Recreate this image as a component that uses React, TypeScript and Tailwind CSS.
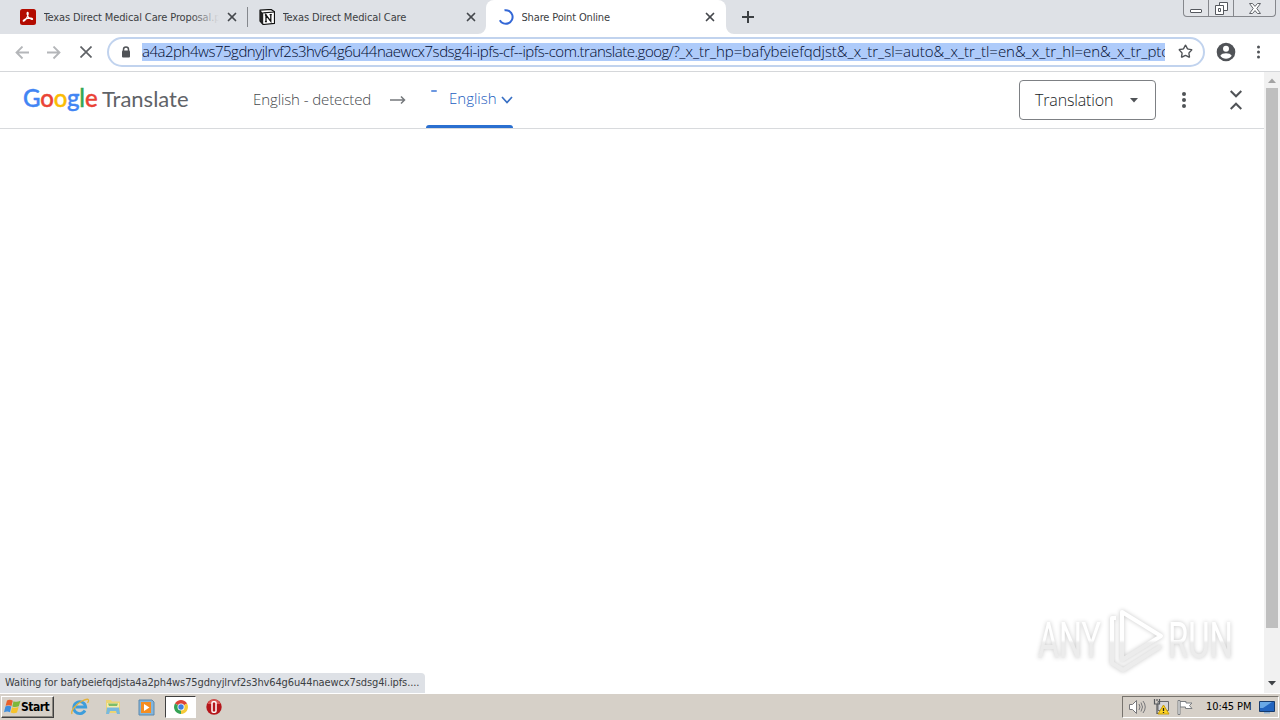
import React from 'react';
import { Star, X } from 'lucide-react';

const URL_HOST = 'a4a2ph4ws75gdnyjlrvf2s3hv64g6u44naewcx7sdsg4i-ipfs-cf--ipfs-com.translate.goog/?';
const URL_QUERY = '_x_tr_hp=bafybeiefqdjst&_x_tr_sl=auto&_x_tr_tl=en&_x_tr_hl=en&_x_tr_ptc';

const AdobeIcon = () => (
  <svg width="16" height="16" viewBox="0 0 16 16" className="shrink-0">
    <rect width="16" height="16" rx="2.5" fill="#b30b00" />
    <path
      d="M7.6 3.4c1.2 0 .5 3-.7 5.200C5.700 10.900 4 12.700 3.300 12.200c-.8-.7 1.700-2.300 4.300-2.800 2.500-.5 5-.4 5 .5 0 1.100-2.200.3-3.700-1.200C7.300 7.200 6.400 3.400 7.600 3.400z"
      fill="none"
      stroke="#fff"
      strokeWidth="1.100"
    />
  </svg>
);

const NotionIcon = () => (
  <svg width="16" height="16" viewBox="0 0 16 16" className="shrink-0">
    <path d="M1 1.200 12 .4l3.500 2.300v11.600L4.200 15.500 1 12z" fill="#fff" stroke="#111" strokeWidth="1.200" strokeLinejoin="round" />
    <path d="M1 1.200 4.200 4v11.500L1 12z" fill="#222" />
    <path d="M4.200 3.800 15.500 3" stroke="#111" strokeWidth="1.200" />
    <path d="M7 12.500V6l4.800 6.300V5.800M5.900 6h1.900M10.600 5.700h2.200M5.900 12.600h2" fill="none" stroke="#111" strokeWidth="1.300" />
  </svg>
);

const Spinner = () => (
  <svg width="16" height="16" viewBox="0 0 16 16" className="shrink-0">
    <path d="M6.500 1.300A6.800 6.800 0 1 1 1.800 11.200" fill="none" stroke="#3367d6" strokeWidth="2" />
  </svg>
);

const CloseIcon = () => <X size={14} strokeWidth={3} className="shrink-0 text-[#45484d]" />;

const Tab = ({ icon, title, spacing, fade }: { icon: React.ReactNode; title: string; spacing: string; fade?: boolean }) => (
  <>
    {icon}
    <div className={`relative ml-[7.5px] mr-1.5 min-w-0 flex-1 overflow-hidden whitespace-nowrap pt-px text-[11px] leading-4 text-[#3c4043] ${spacing}`}>
      {title}
      {fade && <div className="absolute inset-y-0 right-0 w-7 bg-linear-to-r from-transparent to-[#dee1e6]" />}
    </div>
    <CloseIcon />
  </>
);

const TabStrip = () => (
  <div className="relative flex h-[34px] bg-[#dee1e6]">
    <div className="flex w-[247px] items-center border-r border-transparent pl-5 pr-[7px]">
      <Tab icon={<AdobeIcon />} title="Texas Direct Medical Care Proposal.p" spacing="tracking-[-0.13px]" fade />
    </div>
    <div className="my-[7px] w-px bg-[#85888d]" />
    <div className="flex w-[238px] items-center pl-[11px] pr-2">
      <Tab icon={<NotionIcon />} title="Texas Direct Medical Care" spacing="tracking-[-0.13px]" />
    </div>
    <div className="relative flex w-[240px] items-center rounded-t-lg bg-white pl-3 pr-[9px]">
      <svg width="8" height="8" className="absolute -left-2 bottom-0">
        <path d="M8 0v8H0A8 8 0 0 0 8 0z" fill="#fff" />
      </svg>
      <Tab icon={<Spinner />} title="Share Point Online" spacing="tracking-[-0.16px]" />
      <svg width="8" height="8" className="absolute -right-2 bottom-0">
        <path d="M0 0v8h8A8 8 0 0 1 0 0z" fill="#fff" />
      </svg>
    </div>
    <div className="flex items-center pl-4">
      <svg width="12" height="12" stroke="#3c4043" strokeWidth="2">
        <path d="M6 0v12M0 6h12" />
      </svg>
    </div>
    <div className="ml-auto mr-1 flex h-[17px] w-[93px] rounded-b-[4px] border border-t-0 border-[#85878c] bg-[#e2e4e8]">
      <div className="flex w-[25px] items-end justify-center border-r border-[#85878c] pb-[3px]">
        <div className="h-1 w-3 rounded-[1px] border border-[#55585e] bg-white" />
      </div>
      <div className="flex w-[25px] items-center justify-center border-r border-[#85878c]">
        <svg width="13" height="13" fill="#fff" stroke="#55585e">
          <path d="M4.500.500h8v8h-8z" />
          <path d="M.5 3.500h8v9h-8zM3.500 6.500h2v3h-2z" />
        </svg>
      </div>
      <div className="flex flex-1 items-center justify-center">
        <svg width="12" height="11" fill="#fff" stroke="#62656a">
          <path d="M.5.500h3L6 3.400 8.500.500h3L7.800 5.500l3.700 5h-3L6 7.600 3.500 10.500h-3l3.700-5z" />
        </svg>
      </div>
    </div>
  </div>
);

const Toolbar = () => (
  <div className="flex h-[38px] items-center border-b border-[#d5d7da] bg-white pl-[15px]">
    <svg width="14" height="14" fill="none" stroke="#b4b6b9" strokeWidth="1.800">
      <path d="M14 6.500H1.500M7.500.500 1.500 6.500l6 6" />
    </svg>
    <svg width="14" height="14" fill="none" stroke="#b4b6b9" strokeWidth="1.800" className="ml-[18px]">
      <path d="M0 6.500h12.500M6.500.500l6 6-6 6" />
    </svg>
    <svg width="12" height="12" stroke="#5f6266" strokeWidth="1.700" className="-mt-px ml-[19px]">
      <path d="M.5.500l11 11M11.500.500l-11 11" />
    </svg>
    <div className="ml-[15px] flex h-[30px] w-[1098px] -translate-y-px items-center rounded-full border-2 border-[#c1d3ee] bg-white pl-3">
      <svg width="10" height="12" className="mr-[11px] shrink-0">
        <path d="M2.500 5V3.400a2.500 2.500 0 0 1 5 0V5" fill="none" stroke="#505357" strokeWidth="1.500" />
        <rect x="1" y="4.500" width="8" height="7" rx="1" fill="#505357" />
      </svg>
      <div className="h-[18px] w-[1023px] overflow-hidden whitespace-nowrap bg-[#aecbfa] font-['Open_Sans',sans-serif] text-[15px] font-light leading-[17px] text-[#020c30]">
        <span className="tracking-[-0.475px]">{URL_HOST}</span>
        <span className="tracking-[-0.02px]">{URL_QUERY}</span>
      </div>
      <Star size={15} strokeWidth={2.200} className="ml-[13px] shrink-0 text-[#505357]" />
    </div>
    <svg width="20" height="20" className="-mt-px ml-[11px]">
      <circle cx="10" cy="10" r="9.300" fill="#505357" />
      <circle cx="10" cy="6.800" r="3" fill="#fff" />
      <path d="M4.300 13.800c1.500-3.300 9.900-3.300 11.400 0-2.300 4-9.100 4-11.400 0z" fill="#fff" />
    </svg>
    <svg width="4" height="14" fill="#505357" className="-mt-px ml-5">
      <circle cx="2.500" cy="2" r="1.500" />
      <circle cx="2.500" cy="7" r="1.500" />
      <circle cx="2.500" cy="12" r="1.500" />
    </svg>
  </div>
);

const TranslateBar = () => (
  <div className="flex h-[57px] items-center border-b border-[#d8dadd] bg-white pl-[23px]">
    <div className="flex w-[230px] items-baseline pb-1 font-[Lato] leading-7 text-[#5f6368]">
      <span className="w-[79px] text-[24px] font-medium tracking-[-0.2px] [-webkit-text-stroke:0.4px]">
        <span className="text-[#4285f4]">G</span>
        <span className="text-[#ea4335]">o</span>
        <span className="text-[#fbbc04]">o</span>
        <span className="text-[#4285f4]">g</span>
        <span className="text-[#34a853]">l</span>
        <span className="text-[#ea4335]">e</span>
      </span>
      <span className="text-[22px]">Translate</span>
    </div>
    <div className="w-[137px] whitespace-nowrap pb-px font-['Open_Sans',sans-serif] text-[15px] font-light tracking-[-0.1px] text-[#45484c]">
      English - detected
    </div>
    <svg width="16" height="10" fill="none" stroke="#75787c" strokeWidth="1.500">
      <path d="M0 5h14.500M11 1.500 14.500 5 11 8.500" />
    </svg>
    <div className="relative ml-5 h-full w-[87px]">
      <div className="absolute left-[5px] top-[18px] h-0.5 w-[6px] rounded-full bg-[#6c97e0]" />
      <div className="flex h-full items-center pl-[23px] font-['Open_Sans',sans-serif] text-[15px] font-light text-[#1a5cc0]">
        <span className="w-[53px] pb-[3px]">English</span>
        <svg width="12" height="8" fill="none" stroke="#3970c4" strokeWidth="1.700" className="shrink-0">
          <path d="M1 1l5 5.500L11 1" />
        </svg>
      </div>
      <div className="absolute inset-x-0 bottom-0 h-[3px] rounded-t-sm bg-[#2a6fd0]" />
    </div>
    <button className="ml-auto mr-[26px] flex h-10 w-[137px] items-center rounded-[4px] border border-[#7d8084] pl-[15px] font-['Open_Sans',sans-serif] text-base font-light text-[#202326]">
      <span className="w-[95px] text-left tracking-[-0.15px]">Translation</span>
      <svg width="8" height="5" fill="#505357">
        <path d="M0 0h8L4 4.500z" />
      </svg>
    </button>
    <svg width="4" height="18" fill="#505357">
      <circle cx="2" cy="3" r="2" />
      <circle cx="2" cy="9" r="2" />
      <circle cx="2" cy="15" r="2" />
    </svg>
    <svg width="12" height="22" fill="none" stroke="#505357" strokeWidth="2" className="ml-11 mr-[22px]">
      <path d="M.7 2 6 7.300 11.300 2M.7 20 6 14.700 11.300 20" />
    </svg>
  </div>
);

const Watermark = () => (
  <svg
    width="220"
    height="76"
    className="absolute bottom-[13px] right-[14px] overflow-visible drop-shadow-[0_0_2px_rgba(0,0,0,0.22)]"
    fontFamily="Roboto, sans-serif"
    fontSize="50"
  >
    <defs>
      <linearGradient id="mark" x1="0" y1="0" x2="0" y2="72" gradientUnits="userSpaceOnUse">
        <stop offset="0.500" stopColor="#fff" />
        <stop offset="0.540" stopColor="#ececec" />
      </linearGradient>
    </defs>
    <g fill="url(#mark)">
      <text x="8" y="54" textLength="63" lengthAdjust="spacingAndGlyphs">ANY</text>
      <text x="138" y="54" textLength="65" lengthAdjust="spacingAndGlyphs">RUN</text>
    </g>
    <g fill="none" stroke="url(#mark)" strokeWidth="4" strokeLinejoin="round">
      <path d="M92 8 131 32 92 56z" />
      <path d="M86 14h-4v45l11 7 38-24" />
    </g>
  </svg>
);

const Scrollbar = () => (
  <div className="flex w-4 flex-col items-center justify-between bg-[#f1f1f1]">
    <svg width="16" height="16" fill="#a3a3a3">
      <path d="M4 11h8L8 6.500z" />
    </svg>
    <div className="mb-auto h-[540px] w-3 bg-[#bfbfbf]" />
    <svg width="16" height="17" fill="#404347">
      <path d="M4 5h8l-4 4.500z" />
    </svg>
  </div>
);

const Taskbar = () => (
  <div className="flex h-[27px] items-center border-t border-white bg-[#d6d0c8] text-black">
    <div className="ml-px flex h-[22px] w-[53px] items-center border border-b-[#404040] border-l-white border-r-[#404040] border-t-white pl-0.5 shadow-[inset_-1px_-1px_#8b8780]">
      <svg width="17" height="16" viewBox="0 0 17 16">
        <path d="M3 1.500c2-1.200 4.200-.8 5.800.2L7.500 7C5.700 6 3.800 5.900 1.600 6.800z" fill="#e8602c" />
        <path d="M9.500 2.200c2 .9 4.500.8 7-.5L14.800 7.200c-2.300 1-4.500 1-6.500.2z" fill="#7db83a" />
        <path d="M1.400 7.500c2.200-1 4.100-.8 5.900.1L6 13.200C4.100 12.200 2.200 12.300 0 13.300z" fill="#3e8ede" />
        <path d="M8.100 8.200c2 .9 4.300.8 6.500-.2l-1.600 5.600c-2.200 1-4.300.9-6.300 0z" fill="#f6c32c" />
      </svg>
      <span className="text-xs font-bold tracking-[-0.5px]">Start</span>
    </div>
    <div className="flex items-center pl-4">
      <svg width="20" height="18" viewBox="0 0 20 18">
        <path d="M15 12.500A6 6 0 1 1 15.700 9H5.500" fill="none" stroke="#3d9ddb" strokeWidth="2.800" />
        <path d="M2 16C.500 13 6 6 12 3s8-2 5.500 2" fill="none" stroke="#e4b23a" strokeWidth="1.300" />
      </svg>
      <svg width="16" height="16" viewBox="0 0 16 16" className="ml-[15px]">
        <path d="M1 1h5l1 1.500h8V14H1z" fill="#ecd474" />
        <path d="M2 4h12v8H2z" fill="#f8ebab" />
        <path d="M4 7h8l1-2.500H3z" fill="#7cbd69" />
        <path d="M2 8.500h12l1 6.500h-3l-1-3H5l-1 3H1z" fill="#78b9df" />
      </svg>
      <svg width="17" height="17" viewBox="0 0 17 17" className="ml-[17px]">
        <path d="M1 1h13l2 2v13H1z" fill="#83b5dc" stroke="#5d89ad" />
        <rect x="3" y="3" width="10" height="11" fill="#f58d20" />
        <path d="M6 5v7l5.500-3.500z" fill="#fff" />
      </svg>
      <div className="ml-[10px] flex h-[22px] w-[31px] items-center justify-center border border-b-white border-l-[#404040] border-r-white border-t-[#404040] bg-white">
        <svg width="14" height="14" viewBox="0 0 16 16">
          <path d="M8 8 1.100 4A8 8 0 0 1 14.900 4z" fill="#dc4437" />
          <path d="M8 8 8 16A8 8 0 0 1 1.100 4z" fill="#35a355" />
          <path d="M8 8 14.900 4A8 8 0 0 1 8 16z" fill="#f6ca38" />
          <circle cx="8" cy="8" r="4" fill="#fff" />
          <circle cx="8" cy="8" r="3.100" fill="#3f7fe0" />
        </svg>
      </div>
      <svg width="16" height="16" viewBox="0 0 16 16" className="ml-[10px]">
        <circle cx="8" cy="8" r="7.700" fill="#b5161b" />
        <path d="M1.500 5a7 7 0 0 1 13 0z" fill="#dc5551" />
        <rect x="6" y="2.800" width="4" height="10.400" rx="1.300" fill="#b5161b" stroke="#fff" strokeWidth="1.500" />
      </svg>
    </div>
    <div className="ml-auto mr-px flex h-[22px] w-[157px] items-center border border-b-white border-l-[#77736d] border-r-white border-t-[#77736d] pl-1.5">
      <svg width="18" height="16" viewBox="0 0 18 16" fill="none" stroke="#77777a">
        <path d="M.5 5.500h3l4-4v13l-4-4h-3z" fill="#fff" />
        <path d="M10 5q2 3 0 6M12 3.500q3 4.500 0 9M14 2q4.500 6 0 12" />
      </svg>
      <svg width="17" height="16" viewBox="0 0 17 16" className="ml-1.5">
        <path d="M5 2.500h10.500v9H5z" fill="#d5d6d8" stroke="#66696d" />
        <path d="M1.500 0v5h5V0M4 0v2M4 5v9.500h5" fill="none" stroke="#55585b" strokeWidth="1.200" />
        <path d="M10.500 6 16 15H5z" fill="#fdd321" stroke="#c79c0a" />
        <path d="M10.500 9v3M10.500 13v1" stroke="#222" strokeWidth="1.300" />
      </svg>
      <svg width="16" height="15" viewBox="0 0 16 15" className="ml-[7px]" stroke="#7b7e81" fill="#fff">
        <path d="M3 1.500h6v1.500h6l-2.500 2.500L15 8.500H8.500V7H3z" />
        <path d="M1 .500h2v14H1z" />
      </svg>
      <span className="ml-[13px] w-[53px] whitespace-nowrap text-[11px] tracking-[-0.1px]">10:45 PM</span>
      <svg width="16" height="13" viewBox="0 0 16 13">
        <path d="M.5.500h15v10H.500z" fill="#2264bf" stroke="#173b6c" />
        <path d="M1 1h12L4 7H1z" fill="#69a8e6" />
        <path d="M5 11h6v1.500H5z" fill="#8fb1d5" />
      </svg>
    </div>
  </div>
);

export default function App() {
  return (
    <div className="flex h-[720px] w-[1280px] flex-col overflow-hidden bg-white font-['DejaVu_Sans_Condensed','DejaVu_Sans',sans-serif]">
      <TabStrip />
      <Toolbar />
      <div className="flex min-h-0 flex-1">
        <div className="relative flex-1">
          <TranslateBar />
          <Watermark />
          <div className="absolute bottom-0 left-0 h-5 w-[425px] overflow-hidden whitespace-nowrap rounded-tr-[4px] bg-[#dee1e6] pl-[5px] text-[11px] leading-5 tracking-[-0.12px] text-[#3c4043]">
            Waiting for bafybeiefqdjsta4a2ph4ws75gdnyjlrvf2s3hv64g6u44naewcx7sdsg4i.ipfs....
          </div>
        </div>
        <Scrollbar />
      </div>
      <Taskbar />
    </div>
  );
}
